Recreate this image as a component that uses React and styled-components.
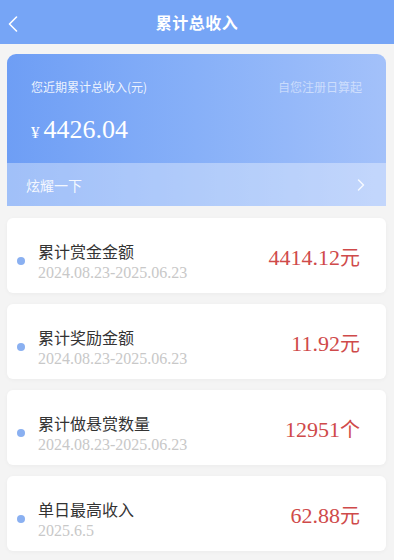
import styled, { createGlobalStyle } from "styled-components";

const GlobalStyle = createGlobalStyle`
  html, body {
    margin: 0;
    padding: 0;
    background: #f4f4f4;
    font-family: "Noto Sans CJK SC", "Noto Sans", sans-serif;
  }
`;

const items = [
  { title: "累计赏金金额", date: "2024.08.23-2025.06.23", value: "4414.12", unit: "元" },
  { title: "累计奖励金额", date: "2024.08.23-2025.06.23", value: "11.92", unit: "元" },
  { title: "累计做悬赏数量", date: "2024.08.23-2025.06.23", value: "12951", unit: "个" },
  { title: "单日最高收入", date: "2025.6.5", value: "62.88", unit: "元" },
];

const App = () => {
  return (
    <Page>
      <GlobalStyle />

      {/* HEADER */}
      <Header>
        <BackButton>
          <svg width="12" height="16" viewBox="0 0 12 16" fill="none">
            <path d="M9.5 1L2.5 8L9.5 15" stroke="#fff" strokeWidth="1.6" strokeLinecap="round" strokeLinejoin="round" />
          </svg>
        </BackButton>
        <Title>累计总收入</Title>
      </Header>

      <Content>
        {/* SUMMARY */}
        <Summary>
          <SummaryTop>
            <SummaryRow>
              <SummaryLabel>您近期累计总收入(元)</SummaryLabel>
              <SummaryHint>自您注册日算起</SummaryHint>
            </SummaryRow>
            <Total>
              <Yen>¥</Yen>4426.04
            </Total>
          </SummaryTop>
          <ShareBar>
            <span>炫耀一下</span>
            <svg width="10" height="14" viewBox="0 0 10 14" fill="none">
              <path d="M2.5 2L7.5 7L2.5 12" stroke="rgba(255,255,255,0.85)" strokeWidth="1.5" strokeLinecap="round" strokeLinejoin="round" />
            </svg>
          </ShareBar>
        </Summary>

        {/* STATS */}
        {items.map((item) => (
          <StatCard key={item.title}>
            <Dot />
            <StatText>
              <StatTitle>{item.title}</StatTitle>
              <StatDate>{item.date}</StatDate>
            </StatText>
            <StatValue>
              {item.value}
              <Unit>{item.unit}</Unit>
            </StatValue>
          </StatCard>
        ))}
      </Content>
    </Page>
  );
};

const Page = styled.div`
  width: 394px;
  min-height: 560px;
  background: #f4f4f4;
`;

const Header = styled.div`
  position: relative;
  height: 44px;
  background: #76a5f6;
  display: flex;
  align-items: center;
  justify-content: center;
`;

const BackButton = styled.div`
  position: absolute;
  left: 7px;
  top: 16px;
  display: flex;
`;

const Title = styled.div`
  color: #fff;
  font-size: 16px;
  font-weight: 700;
  letter-spacing: 0.5px;
`;

const Content = styled.div`
  padding: 10px 8px 0 7px;
  display: flex;
  flex-direction: column;
  gap: 11px;
`;

const Summary = styled.div`
  border-radius: 9px 9px 0 0;
  overflow: hidden;
  background: linear-gradient(90deg, #6e9ef5 0%, #87b0f8 50%, #a3c1fa 100%);
  margin-bottom: 1px;
`;

const SummaryTop = styled.div`
  padding: 24px 24px 0 24px;
  height: 109px;
  box-sizing: border-box;
`;

const SummaryRow = styled.div`
  display: flex;
  justify-content: space-between;
  align-items: center;
  font-size: 12px;
`;

const SummaryLabel = styled.span`
  color: rgba(255, 255, 255, 0.88);
`;

const SummaryHint = styled.span`
  color: rgba(255, 255, 255, 0.5);
`;

const Total = styled.div`
  margin-top: 20px;
  color: #fff;
  font-family: "Liberation Serif", "Times New Roman", serif;
  font-size: 26px;
  line-height: 30px;
`;

const Yen = styled.span`
  font-size: 17px;
  margin-right: 4px;
`;

const ShareBar = styled.div`
  height: 43px;
  padding: 0 20px 0 19px;
  display: flex;
  align-items: center;
  justify-content: space-between;
  background: rgba(255, 255, 255, 0.35);
  color: rgba(255, 255, 255, 0.9);
  font-size: 14px;
`;

const StatCard = styled.div`
  height: 75px;
  background: #fff;
  border-radius: 6px;
  box-shadow: 0 1px 4px rgba(0, 0, 0, 0.04);
  display: flex;
  align-items: center;
  padding: 0 26px 0 10px;
`;

const Dot = styled.div`
  width: 8px;
  height: 8px;
  border-radius: 50%;
  background: #8ab0f1;
  margin-top: 10px;
  margin-right: 13px;
`;

const StatText = styled.div`
  flex: 1;
  display: flex;
  flex-direction: column;
  margin-top: 12px;
`;

const StatTitle = styled.div`
  font-size: 16px;
  color: #333;
  line-height: 21px;
`;

const StatDate = styled.div`
  margin-top: 1px;
  font-family: "Liberation Serif", "Times New Roman", serif;
  font-size: 16px;
  color: #c8c8c8;
  line-height: 20px;
`;

const StatValue = styled.div`
  font-family: "Liberation Serif", "Times New Roman", serif;
  font-size: 22px;
  color: #cf4a4a;
  margin-top: 2px;
`;

const Unit = styled.span`
  font-family: "Noto Sans CJK SC", sans-serif;
  font-size: 20px;
`;

export default App;
